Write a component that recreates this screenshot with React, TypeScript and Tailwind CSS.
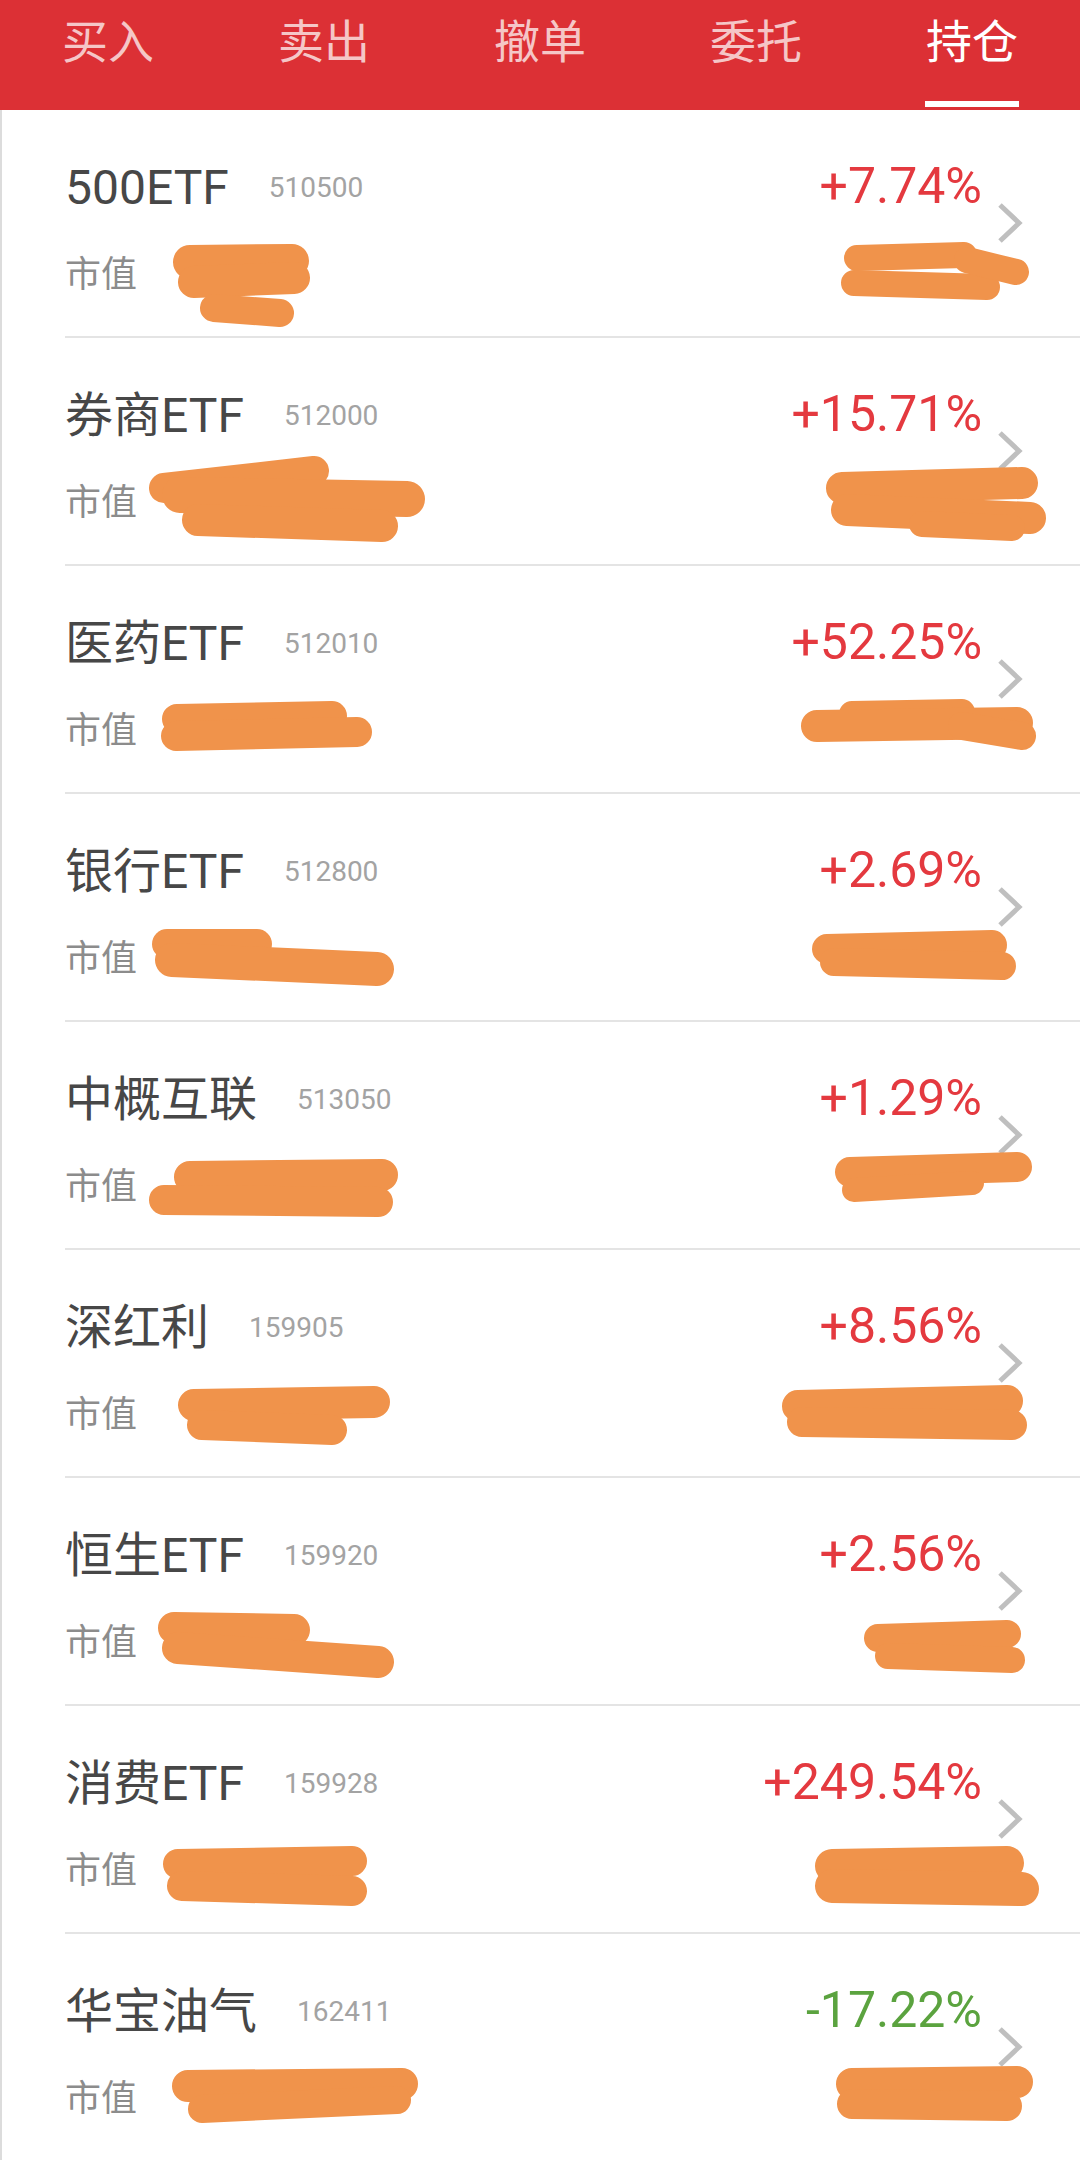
import React from 'react';

type Stroke = [number, number, number, number, number];

interface Holding {
  name: string;
  code: string;
  change: string;
  up: boolean;
  // redaction scribbles, in row coordinates (1080 x 228)
  marks: Stroke[];
}

const TABS = ['买入', '卖出', '撤单', '委托', '持仓'];

const HOLDINGS: Holding[] = [
  {
    name: '500ETF', code: '510500', change: '+7.74%', up: true,
    marks: [
      [188, 152, 290, 151, 34], [192, 172, 292, 168, 32], [212, 198, 278, 203, 28],
      [855, 148, 962, 145, 26], [852, 173, 985, 177, 26], [965, 150, 1014, 162, 26],
    ],
  },
  {
    name: '券商ETF', code: '512000', change: '+15.71%', up: true,
    marks: [
      [162, 150, 312, 133, 30], [178, 157, 405, 161, 36], [196, 182, 380, 188, 32],
      [840, 150, 1020, 145, 32], [845, 172, 1028, 180, 32], [920, 186, 1010, 190, 26],
    ],
  },
  {
    name: '医药ETF', code: '512010', change: '+52.25%', up: true,
    marks: [
      [175, 153, 330, 150, 30], [174, 170, 355, 166, 30],
      [850, 148, 960, 146, 26], [815, 160, 1015, 157, 32], [960, 160, 1020, 170, 28],
    ],
  },
  {
    name: '银行ETF', code: '512800', change: '+2.69%', up: true,
    marks: [
      [165, 150, 255, 150, 30], [170, 166, 375, 175, 34],
      [825, 155, 990, 151, 30], [832, 168, 1000, 172, 28],
    ],
  },
  {
    name: '中概互联', code: '513050', change: '+1.29%', up: true,
    marks: [
      [188, 155, 380, 153, 32], [162, 178, 376, 180, 30],
      [848, 150, 1015, 145, 30], [852, 168, 970, 161, 24],
    ],
  },
  {
    name: '深红利', code: '159905', change: '+8.56%', up: true,
    marks: [
      [192, 155, 372, 152, 32], [200, 175, 330, 180, 30],
      [796, 156, 1005, 151, 32], [800, 172, 1010, 175, 30],
    ],
  },
  {
    name: '恒生ETF', code: '159920', change: '+2.56%', up: true,
    marks: [
      [172, 150, 292, 152, 32], [176, 170, 376, 184, 32],
      [876, 160, 1005, 156, 28], [886, 178, 1010, 182, 26],
    ],
  },
  {
    name: '消费ETF', code: '159928', change: '+249.54%', up: true,
    marks: [
      [176, 158, 350, 155, 30], [180, 180, 350, 185, 30],
      [830, 160, 1005, 157, 34], [830, 180, 1020, 183, 34],
    ],
  },
  {
    name: '华宝油气', code: '162411', change: '-17.22%', up: false,
    marks: [
      [186, 152, 400, 150, 32], [200, 175, 395, 166, 28],
      [850, 150, 1015, 148, 32], [850, 170, 1005, 172, 30],
    ],
  },
];

const FONT = { fontFamily: 'Roboto, "Noto Sans CJK SC", sans-serif' };

const Chevron = () => (
  <svg width="28" height="42" viewBox="0 0 28 42" fill="none">
    <polyline points="4,3 23,21 4,39" stroke="#bfbfbf" strokeWidth="5" />
  </svg>
);

const Row: React.FC<{ item: Holding }> = ({ item }) => (
  <div className="relative">
    <div className="ml-[63px] h-[228px] flex border-b-2 border-[#e4e4e4]">
      {/* name, code and market value */}
      <div className="flex-1 flex flex-col">
        <div className="mt-[46px] h-[64px] flex items-center">
          <span className="text-[48px] leading-none text-[#474747]">{item.name}</span>
          <span className="ml-[40px] text-[28px] leading-none text-[#a3a3a3]">{item.code}</span>
        </div>
        <div className="mt-[30px] h-[50px] flex items-center">
          <span className="text-[36px] leading-none text-[#8c8c8c]">市值</span>
        </div>
      </div>

      {/* profit ratio */}
      <div className="flex flex-col items-end">
        <div className="mt-[44px] h-[64px] flex items-center">
          <span
            className={`text-[50px] leading-none ${item.up ? 'text-[#e4393f]' : 'text-[#5ba33f]'}`}
          >
            {item.change}
          </span>
        </div>
      </div>

      <div className="self-center ml-[14px] mr-[56px] flex">
        <Chevron />
      </div>
    </div>

    {/* redaction marks drawn over the hidden amounts */}
    <svg
      className="absolute top-0 left-0 pointer-events-none"
      width="1080"
      height="228"
      viewBox="0 0 1080 228"
    >
      {item.marks.map(([x1, y1, x2, y2, w], i) => (
        <line
          key={i}
          x1={x1}
          y1={y1}
          x2={x2}
          y2={y2}
          stroke="#f0934b"
          strokeWidth={w}
          strokeLinecap="round"
        />
      ))}
    </svg>
  </div>
);

export default function App() {
  return (
    <div className="w-[1080px] min-h-[2160px] bg-white overflow-hidden" style={FONT}>
      {/* Top tabs */}
      <header className="h-[110px] bg-[#dc3035] grid grid-cols-5">
        {TABS.map((tab, i) => {
          const active = i === TABS.length - 1;
          return (
            <div key={tab} className="flex flex-col items-center">
              <span
                className={`mt-[19px] text-[46px] leading-[46px] ${active ? 'text-white' : 'text-[#f5c6c7]'}`}
              >
                {tab}
              </span>
              {active && <div className="mt-auto mb-[3px] h-[6px] w-[94px] bg-white" />}
            </div>
          );
        })}
      </header>

      {/* Holdings list */}
      <div className="border-l-2 border-[#dcdcdc]">
        {HOLDINGS.map((h) => (
          <Row key={h.code} item={h} />
        ))}
      </div>
    </div>
  );
}
